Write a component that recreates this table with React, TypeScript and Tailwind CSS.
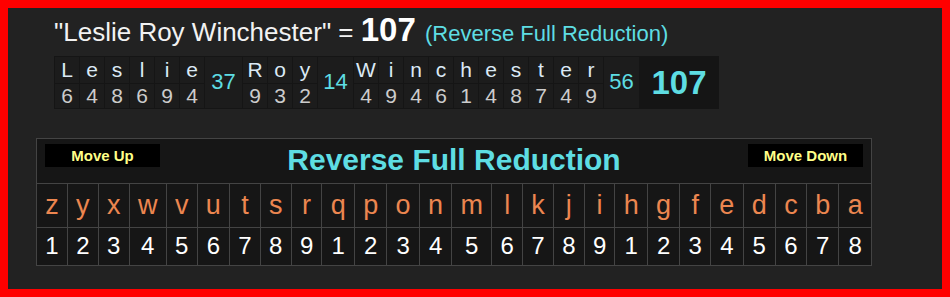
import React from "react";

const words = [
  { letters: "Leslie", values: [6, 4, 8, 6, 9, 4], total: 37 },
  { letters: "Roy", values: [9, 3, 2], total: 14 },
  { letters: "Winchester", values: [4, 9, 4, 6, 1, 4, 8, 7, 4, 9], total: 56 },
];

const alphabet = "zyxwvutsrqponmlkjihgfedcba".split("");
const numbers = [1, 2, 3, 4, 5, 6, 7, 8, 9, 1, 2, 3, 4, 5, 6, 7, 8, 9, 1, 2, 3, 4, 5, 6, 7, 8];

const Word: React.FC<{ letters: string; values: number[] }> = ({ letters, values }) => (
  <div className="flex flex-col gap-px">
    <div className="flex gap-px">
      {letters.split("").map((l, i) => (
        <div key={i} className="w-[24px] h-[26px] bg-[#1c1c1c] flex items-center justify-center text-[21px] leading-none text-[#dbe9f5]">
          {l}
        </div>
      ))}
    </div>
    <div className="flex gap-px">
      {values.map((v, i) => (
        <div key={i} className="w-[24px] h-[24px] bg-[#1c1c1c] flex items-center justify-center text-[21px] leading-none text-[#cccccc]">
          {v}
        </div>
      ))}
    </div>
  </div>
);

export default function App() {
  return (
    <div className="w-[950px] h-[297px] border-8 border-[#ff0000] bg-[#222222] pl-[28px] pt-[3px] font-['Liberation_Sans',Arial,sans-serif]">
      {/* heading */}
      <div className="ml-[18px] flex items-baseline whitespace-pre text-[#f2f2f2] leading-[1.15]">
        <span className="text-[26px]">"Leslie Roy Winchester" = </span>
        <span className="text-[33px] font-bold text-white">107 </span>
        <span className="text-[22px] text-[#5edde3]">(Reverse Full Reduction)</span>
      </div>

      {/* word breakdown */}
      <div className="ml-[18px] mt-[7px] flex w-fit gap-px p-px bg-[#151515]">
        {words.map((w) => (
          <React.Fragment key={w.letters}>
            <Word letters={w.letters} values={w.values} />
            <div className={`${w.total === 37 ? "w-[37px]" : "w-[35px]"} bg-[#1c1c1c] flex items-center justify-center text-[22px] leading-none text-[#5edde3]`}>
              {w.total}
            </div>
          </React.Fragment>
        ))}
        <div className="w-[78px] bg-[#151515] flex items-center justify-center text-[33px] leading-none font-bold text-[#5edde3]">
          107
        </div>
      </div>

      {/* cipher chart */}
      <table className="mt-[29px] w-[836px] border-collapse bg-[#161616]">
        <tbody>
          <tr>
            <td colSpan={26} className="p-0 border border-[#444444]">
              <div className="h-[44px] flex items-start justify-between px-[8px]">
                <button className="mt-[5px] w-[115px] h-[23px] bg-black text-[15px] leading-none font-bold text-[#ffff88]">
                  Move Up
                </button>
                <div className="mt-[4px] text-[30px] font-bold text-[#5edde3] leading-[34px]">
                  Reverse Full Reduction
                </div>
                <button className="mt-[5px] w-[115px] h-[23px] bg-black text-[15px] leading-none font-bold text-[#ffff88]">
                  Move Down
                </button>
              </div>
            </td>
          </tr>
          <tr>
            {alphabet.map((l) => (
              <td key={l} className="px-[8px] py-0 border border-[#444444]">
                <div className="h-[43px] flex items-center justify-center text-[27px] leading-none text-[#ec8650]">{l}</div>
              </td>
            ))}
          </tr>
          <tr>
            {numbers.map((n, i) => (
              <td key={i} className="px-[8px] py-0 border border-[#444444]">
                <div className="h-[37px] flex items-center justify-center text-[24px] leading-none text-white">{n}</div>
              </td>
            ))}
          </tr>
        </tbody>
      </table>
    </div>
  );
}
